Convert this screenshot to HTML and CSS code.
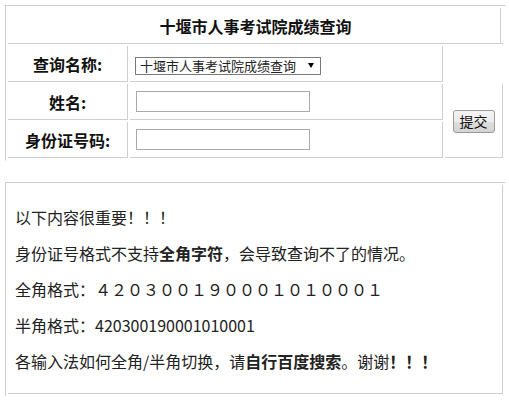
FILE: index.html
```html
<!DOCTYPE html>
<html lang="zh-CN">
<head>
    <meta charset="UTF-8">
    <meta name="viewport" content="width=device-width, initial-scale=1.0">
    <title>十堰市人事考试院成绩查询</title>
    <link rel="stylesheet" href="styles.css">
</head>
<body>
    <form id="queryForm">
        <table class="query">
            <colgroup>
                <col class="col-label">
                <col class="col-field">
                <col class="col-submit">
            </colgroup>
            <tr>
                <td colspan="3" class="title">十堰市人事考试院成绩查询</td>
            </tr>
            <tr>
                <td class="label">查询名称:</td>
                <td class="field">
                    <span class="select-wrap">
                        <select name="exam">
                            <option>十堰市人事考试院成绩查询</option>
                        </select>
                    </span>
                </td>
            </tr>
            <tr>
                <td class="label">姓名:</td>
                <td class="field"><input type="text" name="name"></td>
                <td rowspan="2" class="submit"><button type="submit">提交</button></td>
            </tr>
            <tr>
                <td class="label">身份证号码:</td>
                <td class="field"><input type="text" name="idcard"></td>
            </tr>
        </table>
    </form>

    <div class="notice">
        <div class="notice-body">
            <p>以下内容很重要！！！</p>
            <p>身份证号格式不支持<b>全角字符</b>，会导致查询不了的情况。</p>
            <p>全角格式：４２０３００１９０００１０１０００１</p>
            <p>半角格式：420300190001010001</p>
            <p>各输入法如何全角/半角切换，请<b>自行百度搜索</b>。谢谢<b>！！！</b></p>
        </div>
    </div>
</body>
</html>
```

FILE: styles.css
```css
:root {
    --line: #cfcfcf;
    --text: #111111;
    --muted: #222222;
}

body {
    font-family: "Noto Sans CJK SC", "Noto Sans", sans-serif;
    color: var(--text);
    background: #ffffff;
    margin: 0;
}

form {
    margin: 0;
}

.query {
    width: 501px;
    margin: 5px 0 0 5px;
    table-layout: fixed;
    border-collapse: separate;
    border-spacing: 2px;
    border-top: 1px solid var(--line);
    border-left: 1px solid var(--line);
    border-right: 1px solid #ffffff;
    border-bottom: 1px solid #ffffff;
}

.col-label {
    width: 120px;
}

.col-field {
    width: 313px;
}

.col-submit {
    width: 58px;
}

.query td {
    height: 35px;
    padding: 0;
    border-right: 1px solid var(--line);
    border-bottom: 1px solid var(--line);
}

.title {
    text-align: center;
    font-size: 16px;
    font-weight: bold;
    border-right: none !important;
    box-shadow: inset -2px 0 0 #ffffff, inset -3px 0 0 var(--line);
}

.label {
    text-align: center;
    font-size: 16px;
    font-weight: bold;
}

.field {
    padding-left: 6px !important;
}

.select-wrap {
    position: relative;
    display: inline-block;
    margin-left: -1px;
}

.select-wrap select {
    appearance: none;
    -webkit-appearance: none;
    width: 186px;
    height: 18px;
    margin: 0;
    padding: 0 0 0 4px;
    border: 1px solid #7a7a7a;
    border-radius: 0;
    background: #ffffff;
    font-family: inherit;
    font-size: 13px;
    line-height: 16px;
    color: #222;
    display: block;
}

.select-wrap::after {
    content: "";
    position: absolute;
    right: 7px;
    top: 6px;
    border-top: 5px solid #000;
    border-left: 3px solid transparent;
    border-right: 3px solid transparent;
    pointer-events: none;
}

.field input {
    width: 174px;
    height: 21px;
    margin: 0;
    padding: 0 3px;
    border: 1px solid #a9a9a9;
    box-sizing: border-box;
    display: block;
    font-family: inherit;
    font-size: 13px;
}

.submit {
    text-align: center;
}

.submit button {
    width: 42px;
    height: 23px;
    padding: 0;
    border: 1px solid #9a9a9a;
    border-radius: 3px;
    background: linear-gradient(#f4f4f4, #ececec 50%, #dedede 51%, #d4d4d4);
    font-family: inherit;
    font-size: 14px;
    line-height: 20px;
    color: #111;
    cursor: pointer;
}

.notice {
    width: 501px;
    margin: 21px 0 0 5px;
    padding: 2px;
    box-sizing: border-box;
    border-top: 1px solid var(--line);
    border-left: 1px solid var(--line);
    border-right: 1px solid #ffffff;
}

.notice-body {
    padding: 22px 7px 22px 7px;
    border-right: 1px solid var(--line);
    border-bottom: 1px solid var(--line);
    font-size: 16px;
    color: var(--muted);
}

.notice-body p {
    margin: 0 0 16px;
    line-height: 20px;
}

.notice-body p:last-child {
    margin-bottom: 0;
}
```
